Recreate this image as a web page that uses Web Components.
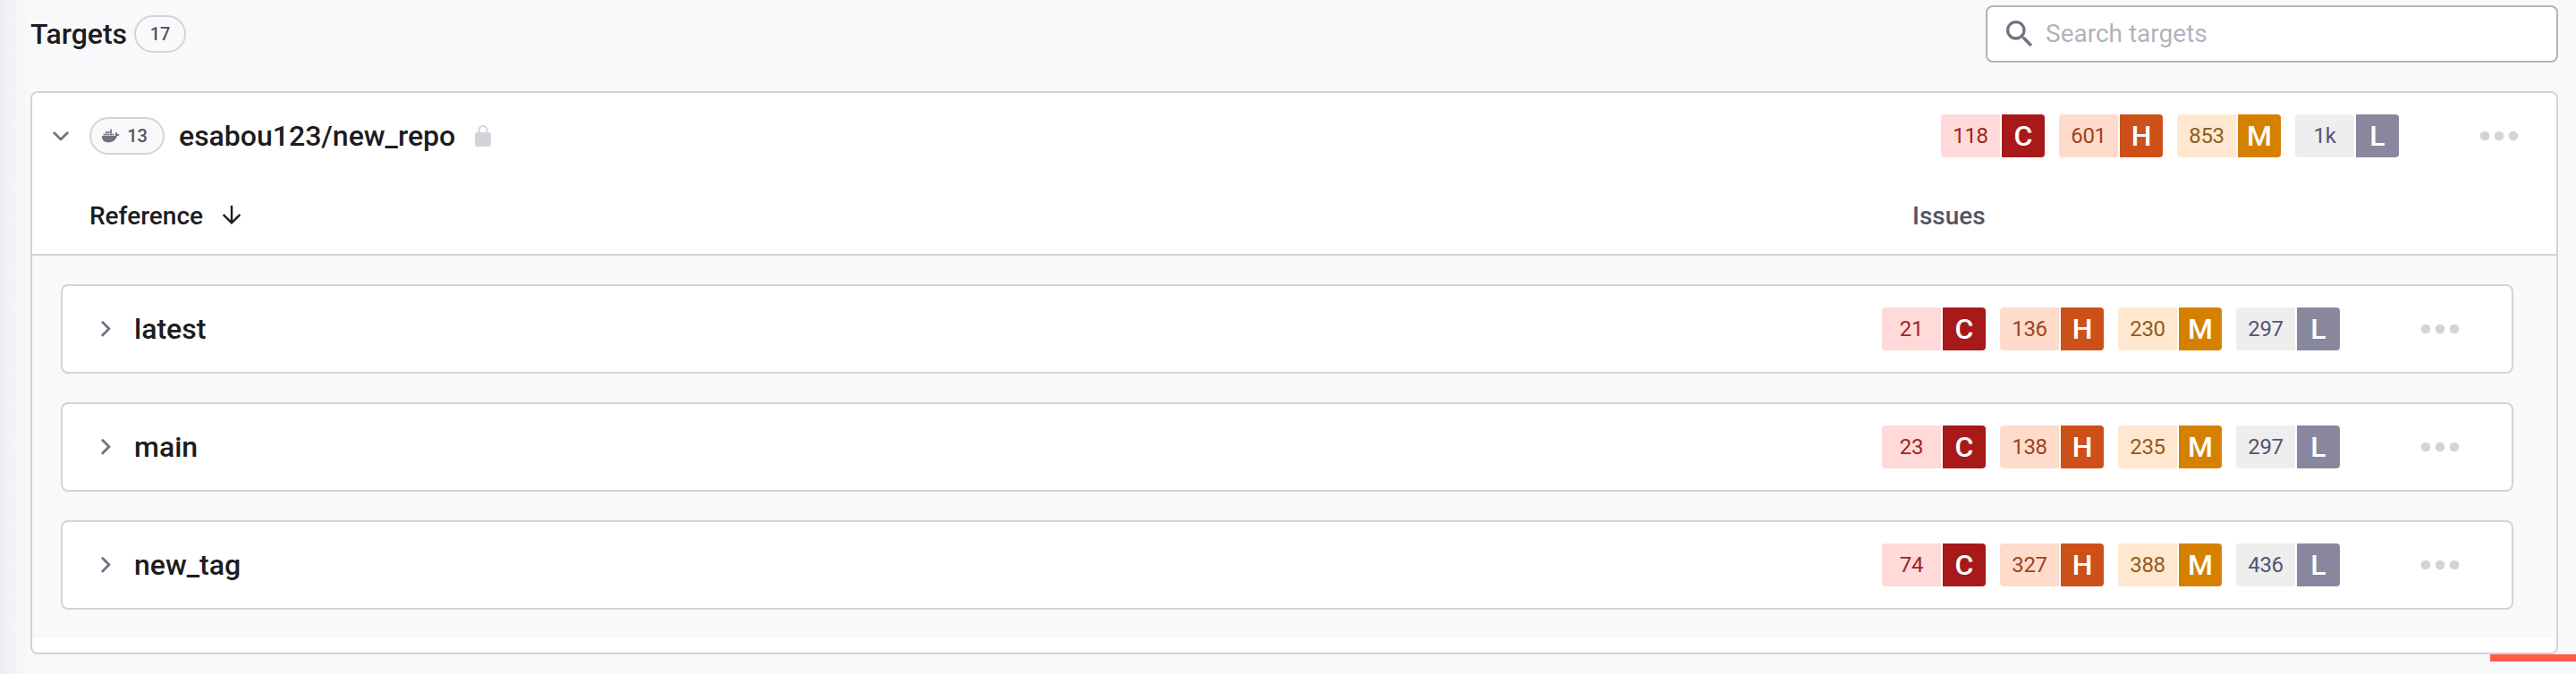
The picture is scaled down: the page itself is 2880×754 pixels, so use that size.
<!DOCTYPE html>
<html lang="en">
<head>
<meta charset="utf-8">
<title>Targets</title>
<style>
html,body{margin:0;height:100%}
body{background:#f9f9fb;font-family:Roboto,"Liberation Sans",sans-serif;overflow:hidden}
</style>
</head>
<body>
<targets-page></targets-page>
<script>
const define = (name, html) => customElements.define(name, class extends HTMLElement {
  constructor(){
    super();
    this.attachShadow({mode:'open'}).innerHTML = html;
  }
});

define('count-pill', `<style>
:host{display:flex;align-items:center;justify-content:center;box-sizing:border-box;height:42px;border:2px solid #d3d3d9;border-radius:21px;background:#f9f9fb;color:#555463;font-weight:500;font-size:20px;line-height:24px;flex:none}
</style><slot></slot>`);

define('search-box', `<style>
:host{display:flex;align-items:center;box-sizing:border-box;width:640px;height:64px;border:2px solid #b3b2bd;border-radius:8px;background:#fff;color:#b3b2bd;font-size:28px;line-height:32px;padding:0 0 1px 16px}
svg{flex:none;margin-right:9px}
</style><svg width="40" height="40" viewBox="0 0 24 24" fill="#727184"><path d="M15.5 14h-.79l-.28-.27A6.471 6.471 0 0 0 16 9.5 6.5 6.5 0 1 0 9.5 16c1.61 0 3.09-.59 4.23-1.57l.27.28v.79l5 4.99L20.49 19l-4.99-5zm-6 0C7.01 14 5 11.99 5 9.5S7.01 5 9.5 5 14 7.01 14 9.5 11.99 14 9.5 14z"/></svg><slot></slot>`);

customElements.define('issue-count', class extends HTMLElement {
  connectedCallback(){
    const level = this.getAttribute('level');
    const [bg, fg, strong] = {C:['#ffdad8','#a42222','#a81919'],H:['#ffdbcc','#a3421b','#ce5019'],M:['#ffe8cf','#925c1e','#d68000'],L:['#eeeeee','#555374','#88879e']}[level];
    this.attachShadow({mode:'open'}).innerHTML = `<style>
:host{display:flex;gap:2px;height:48px;flex:none}
span{display:flex;align-items:center;justify-content:center;height:48px}
.n{width:66px;background:${bg};color:${fg};font-size:24px;font-weight:400;letter-spacing:-.3px;border-radius:4px 0 0 4px}
.l{width:48px;background:${strong};color:#fff;font-size:32px;font-weight:500;border-radius:0 4px 4px 0}
</style><span class="n"><slot></slot></span><span class="l">${level}</span>`;
  }
});

customElements.define('issue-summary', class extends HTMLElement {
  connectedCallback(){
    const n = this.getAttribute('counts').split(',');
    this.attachShadow({mode:'open'}).innerHTML = `<style>
:host{display:flex;gap:16px;align-items:center;flex:none;margin-left:auto}
svg{margin-left:68px;display:block}
</style>${['C','H','M','L'].map((l,i)=>`<issue-count level="${l}">${n[i]}</issue-count>`).join('')}
<svg width="60" height="16" fill="#d3d3d9"><circle cx="28" cy="8" r="5.35"/><circle cx="44" cy="8" r="5.35"/><circle cx="12" cy="8" r="5.35"/></svg>`;
  }
});

define('target-row', `<style>
:host{display:flex;align-items:center;box-sizing:border-box;height:100px;border:2px solid #d3d3d9;border-radius:8px;background:#fff;padding:0 48px 0 40px;color:#1c1c21;font-weight:500;font-size:32px}
svg{flex:none;margin-right:22px}
</style><svg width="18" height="24" fill="none" stroke="#727184" stroke-width="2.8" stroke-linecap="round" stroke-linejoin="miter"><path d="M4.700 4.500l7.200 7.300-7.200 7.300"/></svg><slot></slot><slot name="issues"></slot>`);

define('target-group', `<style>
:host{display:block;box-sizing:border-box;height:630px;border:2px solid #d3d3d9;border-radius:8px;background:#fff;color:#1c1c21;font-weight:500}
.head{display:flex;align-items:center;height:96px;padding:0 32px 0 20px}
.chev{margin-right:18px;flex:none}
count-pill{width:84px;margin-right:16px;padding-right:5px}
.whale{margin-right:8px}
.name{font-size:32px}
.lock{margin-left:22px}
.cols{display:flex;align-items:center;box-sizing:border-box;height:86px;padding:0 0 1px 64px;font-size:28px;border-bottom:2px solid #d3d3d9}
.cols svg{margin-left:20px}
.iss{color:#555463;margin-left:auto;width:720px}
.body{display:flex;flex-direction:column;gap:32px;background:#f9f9fb;padding:32px 48px 32px 32px}
</style>
<div class="head">
<svg class="chev" width="26" height="24" fill="none" stroke="#727184" stroke-width="2.8" stroke-linecap="round"><path d="M4.700 8.700l7.300 7.200 7.300-7.200"/></svg>
<count-pill><svg class="whale" width="20" height="16" viewBox="0 0 22 17.600" fill="#727184"><path d="M0 8.800h15.200c.9 0 1.400-.5 1.300-1.400-.2-1.200.1-2.500.9-3.500l.5.400c.8.700 1.100 1.400 1.200 2.300 1-.2 1.900 0 2.600.5-.6 1.200-1.700 1.800-3.100 1.800C17.100 14 13.700 16.800 8.300 16.800 2.800 16.800-.3 14 0 8.800z"/><path d="M1.800 6h2.200v2.200H1.800zM4.500 6h2.200v2.200H4.500zM7.200 6h2.200v2.200H7.200zM9.900 6h2.200v2.200H9.900zM12.600 6h2.200v2.200h-2.200zM4.500 3.400h2.200v2.200H4.500zM7.200 3.400h2.200v2.200H7.200zM9.900 3.400h2.200v2.200H9.900zM9.900.7h2.200v2.200H9.900z"/></svg>13</count-pill>
<span class="name"><slot name="name"></slot></span>
<svg class="lock" width="18" height="24" viewBox="0 0 18 24"><rect y="8" width="18" height="16" rx="2.500" fill="#d3d3d9"/><path d="M4.500 9V5.500a4.500 4.500 0 0 1 9 0V9" fill="none" stroke="#d3d3d9" stroke-width="2"/></svg>
<slot name="issues"></slot>
</div>
<div class="cols"><span>Reference</span><svg width="24" height="23" fill="none" stroke="#1c1c21" stroke-width="2.400"><path d="M12 0v20M2.700 10.200l9.300 9.200 9.300-9.200"/></svg><span class="iss">Issues</span></div>
<div class="body"><slot></slot></div>`);

define('targets-page', `<style>
:host{display:block;box-sizing:border-box;height:754px;padding:6px 20px 0 34px;background:linear-gradient(90deg,#efeff3 0,#f9f9fb 34px)}
header{display:flex;align-items:center;height:64px;margin-bottom:32px;color:#1c1c21;font-weight:500;font-size:32px}
h1{font:inherit;margin:0 8px 0 0}
count-pill{width:58px}
search-box{margin-left:auto;font-weight:400}
.bar{height:8px;width:96px;background:#ff5b4c;margin:0 -20px 0 auto}
</style>
<header><h1>Targets</h1><count-pill>17</count-pill><search-box>Search targets</search-box></header>
<target-group><span slot="name">esabou123/new_repo</span><issue-summary slot="issues" counts="118,601,853,1k"></issue-summary>
<target-row>latest<issue-summary slot="issues" counts="21,136,230,297"></issue-summary></target-row>
<target-row>main<issue-summary slot="issues" counts="23,138,235,297"></issue-summary></target-row>
<target-row>new_tag<issue-summary slot="issues" counts="74,327,388,436"></issue-summary></target-row>
</target-group><div class="bar"></div>`);
</script>
</body>
</html>
